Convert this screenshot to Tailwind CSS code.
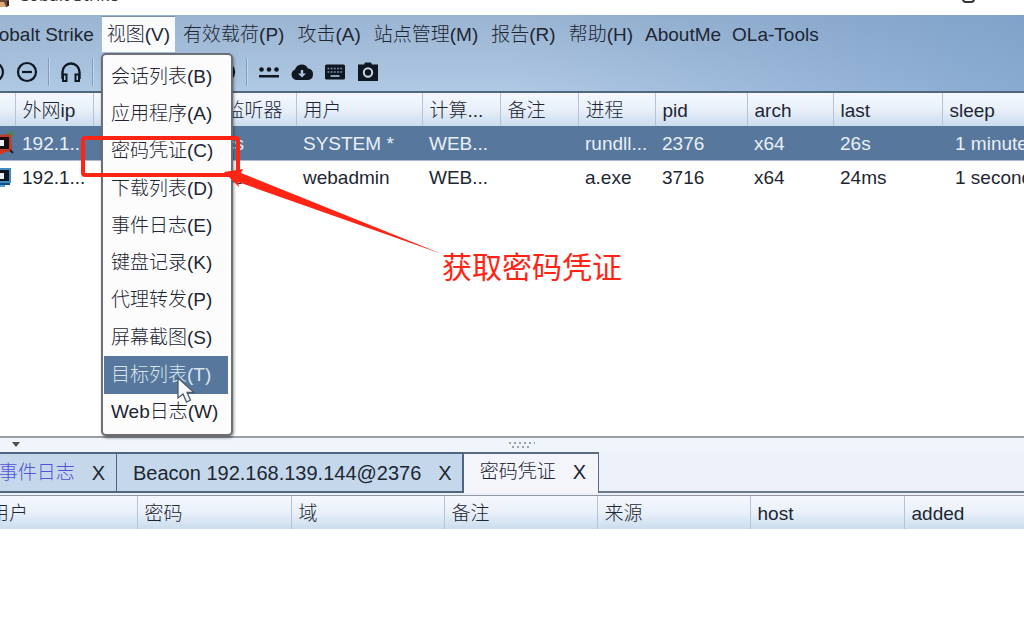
<!DOCTYPE html>
<html lang="zh-CN">
<head>
  <meta charset="UTF-8">
  <meta name="viewport" content="width=device-width, initial-scale=1.0">
  <title>Cobalt Strike</title>
  <script src="https://cdn.jsdelivr.net/npm/@tailwindcss/browser@4"></script>
</head>
<body class="relative flex flex-col h-screen overflow-hidden bg-white text-[#1d2632] text-[19px] leading-6 font-light font-['Liberation_Sans','Noto_Sans_CJK_SC',sans-serif]">

  <!-- title bar -->
  <header class="flex items-end justify-between h-[15px] shrink-0 overflow-hidden bg-white">
    <div class="flex items-end gap-2 pb-2">
      <svg class="w-[10px] h-5" viewBox="0 0 10 20"><path d="M0 0h9v18l-2 2H0z" fill="#6b4a35"/><path d="M0 15h4l2 5H0z" fill="#e0a878"/><path d="M7 14h2v5H7z" fill="#222"/></svg>
      <h1 class="text-[17px] leading-6 font-normal font-['Open_Sans',sans-serif] text-[#333]">Cobalt Strike</h1>
    </div>
    <button aria-label="最大化" class="pr-[49px] pb-3"><span class="block w-[13px] h-[13px] rounded-sm border-2 border-[#333]"></span></button>
  </header>

  <div class="shrink-0 bg-linear-to-b from-[#9ab4d1] to-[#afc8e4] border-b-2 border-[#50677e]">
    <div class="bg-linear-to-r from-transparent from-50% to-[#6f96c5]/60">
      <!-- menu bar -->
      <nav class="flex gap-[3px] -ml-5 pt-px whitespace-nowrap">
        <button class="h-9 px-[5px] pt-px">Cobalt Strike</button>
        <button class="h-9 px-[5px] bg-[#fafbfd] border-t border-[#7c8ea3]">视图(V)</button>
        <button class="h-9 px-[5px] pt-px">有效载荷(P)</button>
        <button class="h-9 px-[5px] pt-px">攻击(A)</button>
        <button class="h-9 px-[5px] pt-px">站点管理(M)</button>
        <button class="h-9 px-[5px] pt-px">报告(R)</button>
        <button class="h-9 px-[5px] pt-px">帮助(H)</button>
        <button class="h-9 px-1 pt-px">AboutMe</button>
        <button class="h-9 px-1 pt-px">OLa-Tools</button>
      </nav>

      <!-- tool bar -->
      <div class="flex items-center -ml-[23px] h-[39px] pt-px text-[#0f1720]">
        <button aria-label="连接" class="flex justify-center w-[33px]"><svg class="size-[22px]" viewBox="0 0 22 22" fill="none" stroke="currentColor" stroke-width="2.200"><circle cx="11" cy="11" r="9"/><path d="M6 11h10M11 6v10"/></svg></button>
        <button aria-label="断开" class="flex justify-center w-[33px]"><svg class="size-[22px]" viewBox="0 0 22 22" fill="none" stroke="currentColor" stroke-width="2.200"><circle cx="11" cy="11" r="9"/><path d="M6 11h10"/></svg></button>
        <span class="w-px h-7 mx-[5px] bg-[#7f9cbd] shadow-[1px_0_0_#c4d6ea]"></span>
        <button aria-label="监听器" class="flex justify-center w-[33px]"><svg class="size-[22px]" viewBox="0 0 22 22" fill="none" stroke="currentColor" stroke-width="2.400"><path d="M2.500 18v-7a8.500 8.500 0 0 1 17 0v7"/><path d="M3 13.500h3.500v6.500H3zM15.500 13.500H19v6.500h-3.500z" stroke-width="2"/></svg></button>
        <span class="w-px h-7 mx-[5px] bg-[#7f9cbd] shadow-[1px_0_0_#c4d6ea]"></span>
        <button aria-label="列表" class="w-[33px] h-6"></button>
        <button aria-label="表格" class="w-[33px] h-6"></button>
        <button aria-label="图形" class="w-[33px] h-6"></button>
        <span class="w-px h-7 mx-[5px]"></span>
        <button aria-label="目标" class="flex justify-center w-[33px]"><svg class="size-[22px]" viewBox="0 0 22 22" fill="none" stroke="currentColor" stroke-width="2.400"><circle cx="11" cy="11" r="9"/><circle cx="11" cy="11" r="4"/><path d="M14 8l5-2M14 14l5 2"/></svg></button>
        <span class="w-px h-7 mx-[5px] bg-[#7f9cbd] shadow-[1px_0_0_#c4d6ea]"></span>
        <button aria-label="凭证" class="flex justify-center w-[33px]"><svg class="size-[22px]" viewBox="0 0 22 22" fill="currentColor"><circle cx="3.500" cy="8.500" r="2.300"/><circle cx="11" cy="8.500" r="2.300"/><circle cx="18.500" cy="8.500" r="2.300"/><path d="M1 14h20v2.500H1z"/></svg></button>
        <button aria-label="下载" class="flex justify-center w-[33px]"><svg class="w-6 h-[22px]" viewBox="0 0 24 22"><path d="M6 19a5.500 5.500 0 0 1-1-10.500A7 7 0 0 1 18 7.500 5.800 5.800 0 0 1 18 19z" fill="currentColor"/><path d="M10.800 9h2.400v3.500H16l-4 4-4-4h2.800z" fill="#a9c3df"/></svg></button>
        <button aria-label="键盘记录" class="flex justify-center w-[33px]"><svg class="size-[22px]" viewBox="0 0 22 22"><rect x="1" y="3.500" width="20" height="15" rx="1.500" fill="currentColor"/><path d="M3.500 7.500h15M3.500 11h15" stroke="#7d93ac" stroke-width="1.600" stroke-dasharray="1.800 1.400"/><path d="M6.500 15h9" stroke="#a9c3df" stroke-width="1.600"/></svg></button>
        <button aria-label="屏幕截图" class="flex justify-center w-[33px]"><svg class="size-[22px]" viewBox="0 0 22 22"><path d="M1 3.500h6l1-2h6l1 2h6V20H1z" fill="currentColor"/><circle cx="11" cy="11.500" r="4.200" fill="none" stroke="#c8d8ea" stroke-width="2"/></svg></button>
      </div>
    </div>
  </div>

  <!-- sessions -->
  <main class="flex-1 min-h-0 overflow-hidden bg-white">
    <table class="w-full table-fixed text-left whitespace-nowrap">
      <colgroup>
        <col class="w-[15px]"><col class="w-[78px]"><col class="w-[125px]"><col class="w-[78px]"><col class="w-[126px]"><col class="w-[78px]"><col class="w-[78px]"><col class="w-[77px]"><col class="w-[92px]"><col class="w-[86px]"><col class="w-[109px]"><col>
      </colgroup>
      <thead>
        <tr class="h-[33px] bg-linear-to-b from-[#f5f8fe] via-[#e9f0fa] to-[#cbdcee]">
          <th class="border-r border-[#b4c4d6]"></th>
          <th class="border-r border-[#b4c4d6] pl-[7px] pt-[2px] font-light">外网ip</th>
          <th class="border-r border-[#b4c4d6]"></th>
          <th class="border-r border-[#b4c4d6] pl-[7px] pt-[2px] font-light">监听器</th>
          <th class="border-r border-[#b4c4d6] pl-[7px] pt-[2px] font-light">用户</th>
          <th class="border-r border-[#b4c4d6] pl-[7px] pt-[2px] font-light">计算...</th>
          <th class="border-r border-[#b4c4d6] pl-[7px] pt-[2px] font-light">备注</th>
          <th class="border-r border-[#b4c4d6] pl-[7px] pt-[2px] font-light">进程</th>
          <th class="border-r border-[#b4c4d6] pl-[7px] pt-[2px] font-light">pid</th>
          <th class="border-r border-[#b4c4d6] pl-[7px] pt-[2px] font-light">arch</th>
          <th class="border-r border-[#b4c4d6] pl-[7px] pt-[2px] font-light">last</th>
          <th class="pl-[7px] pt-[2px] font-light">sleep</th>
        </tr>
      </thead>
      <tbody>
        <tr class="h-[34px] bg-[#57789c] text-[#e9eff6] border-b border-[#a9bccf]">
          <td><svg class="w-[14px] h-6" viewBox="0 0 14 24"><path d="M0 4l11-1 1 17-12 2z" fill="#c33a22"/><path d="M0 6h9v12H0z" fill="#140c0c"/><path d="M0 9h4v6H0z" fill="#e8eef4"/><path d="M10 4l3-4M9 2l4 3" stroke="#4c8a35" stroke-width="2"/><path d="M10 19l3 3" stroke="#222" stroke-width="2"/><path d="M0 20h3v3H0z" fill="#f02a1a"/></svg></td>
          <td class="pl-[7px] pt-[2px]">192.1...</td>
          <td></td>
          <td class="pl-[7px] pt-[2px]">cs</td>
          <td class="pl-[7px] pt-[2px]">SYSTEM *</td>
          <td class="pl-[7px] pt-[2px]">WEB...</td>
          <td></td>
          <td class="pl-[7px] pt-[2px]">rundll...</td>
          <td class="pl-[7px] pt-[2px]">2376</td>
          <td class="pl-[7px] pt-[2px]">x64</td>
          <td class="pl-[7px] pt-[2px]">26s</td>
          <td class="pl-[13px] pt-[2px] overflow-hidden">1 minute</td>
        </tr>
        <tr class="h-[33px]">
          <td><svg class="w-[14px] h-6" viewBox="0 0 14 24"><path d="M0 3h11v15H0z" fill="#3e8ac4"/><path d="M0 5h9v11H0z" fill="#0b1420"/><path d="M0 8h4v6H0z" fill="#e8eef4"/><path d="M0 18h10v2H0z" fill="#1c4d7a"/><path d="M0 20h5v2H0z" fill="#4aa0dc"/></svg></td>
          <td class="pl-[7px] pt-[2px]">192.1...</td>
          <td></td>
          <td class="pl-[7px] pt-[2px]">cs</td>
          <td class="pl-[7px] pt-[2px]">webadmin</td>
          <td class="pl-[7px] pt-[2px]">WEB...</td>
          <td></td>
          <td class="pl-[7px] pt-[2px]">a.exe</td>
          <td class="pl-[7px] pt-[2px]">3716</td>
          <td class="pl-[7px] pt-[2px]">x64</td>
          <td class="pl-[7px] pt-[2px]">24ms</td>
          <td class="pl-[13px] pt-[2px] overflow-hidden">1 second</td>
        </tr>
      </tbody>
    </table>
  </main>

  <!-- lower pane -->
  <section class="flex flex-col shrink-0 h-[205px] border-t-2 border-[#9a9fa6] bg-white">
    <div class="flex items-start h-[14px] shrink-0 pt-1 pl-3 bg-[#f0f4fb]">
      <svg class="w-2 h-[5px]" viewBox="0 0 8 5"><path d="M0 0h8L4 5z" fill="#4a5058"/></svg>
      <svg class="w-[26px] h-[6px] mx-auto" viewBox="0 0 26 6" stroke="#9aa2ac" stroke-width="2" stroke-dasharray="2 3"><path d="M0 1h26M3 5h20"/></svg>
    </div>
    <div class="flex shrink-0 h-[41px] bg-[#edf2fa] whitespace-nowrap">
      <div class="flex items-center justify-end gap-[17px] w-[117px] pr-[11px] bg-[#c5d8eb] border-y-2 border-r border-[#4e6680]">
        <button class="text-[#5352d6]">事件日志</button>
        <button aria-label="关闭 事件日志" class="text-xl">X</button>
      </div>
      <div class="flex items-center gap-[17px] pl-4 pr-[10px] bg-[#c5d8eb] border-y-2 border-r-2 border-[#4e6680]">
        <button class="text-xl">Beacon 192.168.139.144@2376</button>
        <button aria-label="关闭 Beacon" class="text-xl">X</button>
      </div>
      <div class="flex items-center gap-[17px] pl-4 pr-3 pb-1 bg-[#f3f5fb] border-t-2 border-r border-[#5b6c7e]">
        <button>密码凭证</button>
        <button aria-label="关闭 密码凭证" class="text-xl">X</button>
      </div>
      <div class="flex-1 border-b-2 border-[#6d7987]"></div>
    </div>
    <div class="h-[3px] shrink-0 bg-[#eceff6] border-b border-[#8f98a3]"></div>
    <div class="overflow-hidden bg-linear-to-b from-[#f5f8fe] via-[#e9f0fa] to-[#cbdcee]">
      <table class="w-full -ml-[17px] table-fixed text-left whitespace-nowrap">
        <colgroup>
          <col class="w-[154px]"><col class="w-[154px]"><col class="w-[153px]"><col class="w-[153px]"><col class="w-[153px]"><col class="w-[154px]"><col>
        </colgroup>
        <thead>
          <tr class="h-[33px]">
            <th class="border-r border-[#b4c4d6] pl-[7px] pt-[2px] font-light">用户</th>
            <th class="border-r border-[#b4c4d6] pl-[7px] pt-[2px] font-light">密码</th>
            <th class="border-r border-[#b4c4d6] pl-[7px] pt-[2px] font-light">域</th>
            <th class="border-r border-[#b4c4d6] pl-[7px] pt-[2px] font-light">备注</th>
            <th class="border-r border-[#b4c4d6] pl-[7px] pt-[2px] font-light">来源</th>
            <th class="border-r border-[#b4c4d6] pl-[7px] pt-[2px] font-light">host</th>
            <th class="pl-[7px] pt-[2px] font-light">added</th>
          </tr>
        </thead>
      </table>
    </div>
  </section>

  <!-- open menu -->
  <div role="menu" class="absolute left-[101px] top-[53px] flex flex-col w-[132px] h-[383px] py-[3px] pl-px pr-[3px] bg-[#fcfcfd] border-2 border-[#6c7076] rounded-[5px] shadow-[1px_2px_3px_#0006] whitespace-nowrap">
    <button role="menuitem" class="flex-1 px-[7px] text-left">会话列表(B)</button>
    <button role="menuitem" class="flex-1 px-[7px] text-left">应用程序(A)</button>
    <button role="menuitem" class="flex-1 px-[7px] text-left">密码凭证(C)</button>
    <button role="menuitem" class="flex-1 px-[7px] text-left">下载列表(D)</button>
    <button role="menuitem" class="flex-1 px-[7px] text-left">事件日志(E)</button>
    <button role="menuitem" class="flex-1 px-[7px] text-left">键盘记录(K)</button>
    <button role="menuitem" class="flex-1 px-[7px] text-left">代理转发(P)</button>
    <button role="menuitem" class="flex-1 px-[7px] text-left">屏幕截图(S)</button>
    <button role="menuitem" class="flex-1 px-[7px] text-left bg-[#57789c] text-[#d9e4f0]">目标列表(T)</button>
    <button role="menuitem" class="flex-1 px-[7px] text-left">Web日志(W)</button>
  </div>

  <!-- pointer -->
  <svg class="absolute left-[177px] top-[377px] w-[18px] h-[26px]" viewBox="0 0 18 26"><path d="M1 1v20l5-4 3.500 8 4-2-3.500-7.500h7z" fill="#f6f8fb" stroke="#4d5a6a" stroke-width="1.300"/></svg>

  <!-- callout -->
  <div class="absolute left-[81px] top-[136px] w-[159px] h-[41px] border-4 border-[#ff2414] rounded-[4px]"></div>
  <svg class="absolute left-[224px] top-[166px] w-[218px] h-[88px]" viewBox="0 0 218 88"><path d="M0 6l19-3-2 4 201 81L14 16l1 5z" fill="#ff2414"/></svg>
  <p class="absolute left-[442px] top-[250px] text-[30px] leading-9 font-normal text-[#ff2414] whitespace-nowrap">获取密码凭证</p>
</body>
</html>
